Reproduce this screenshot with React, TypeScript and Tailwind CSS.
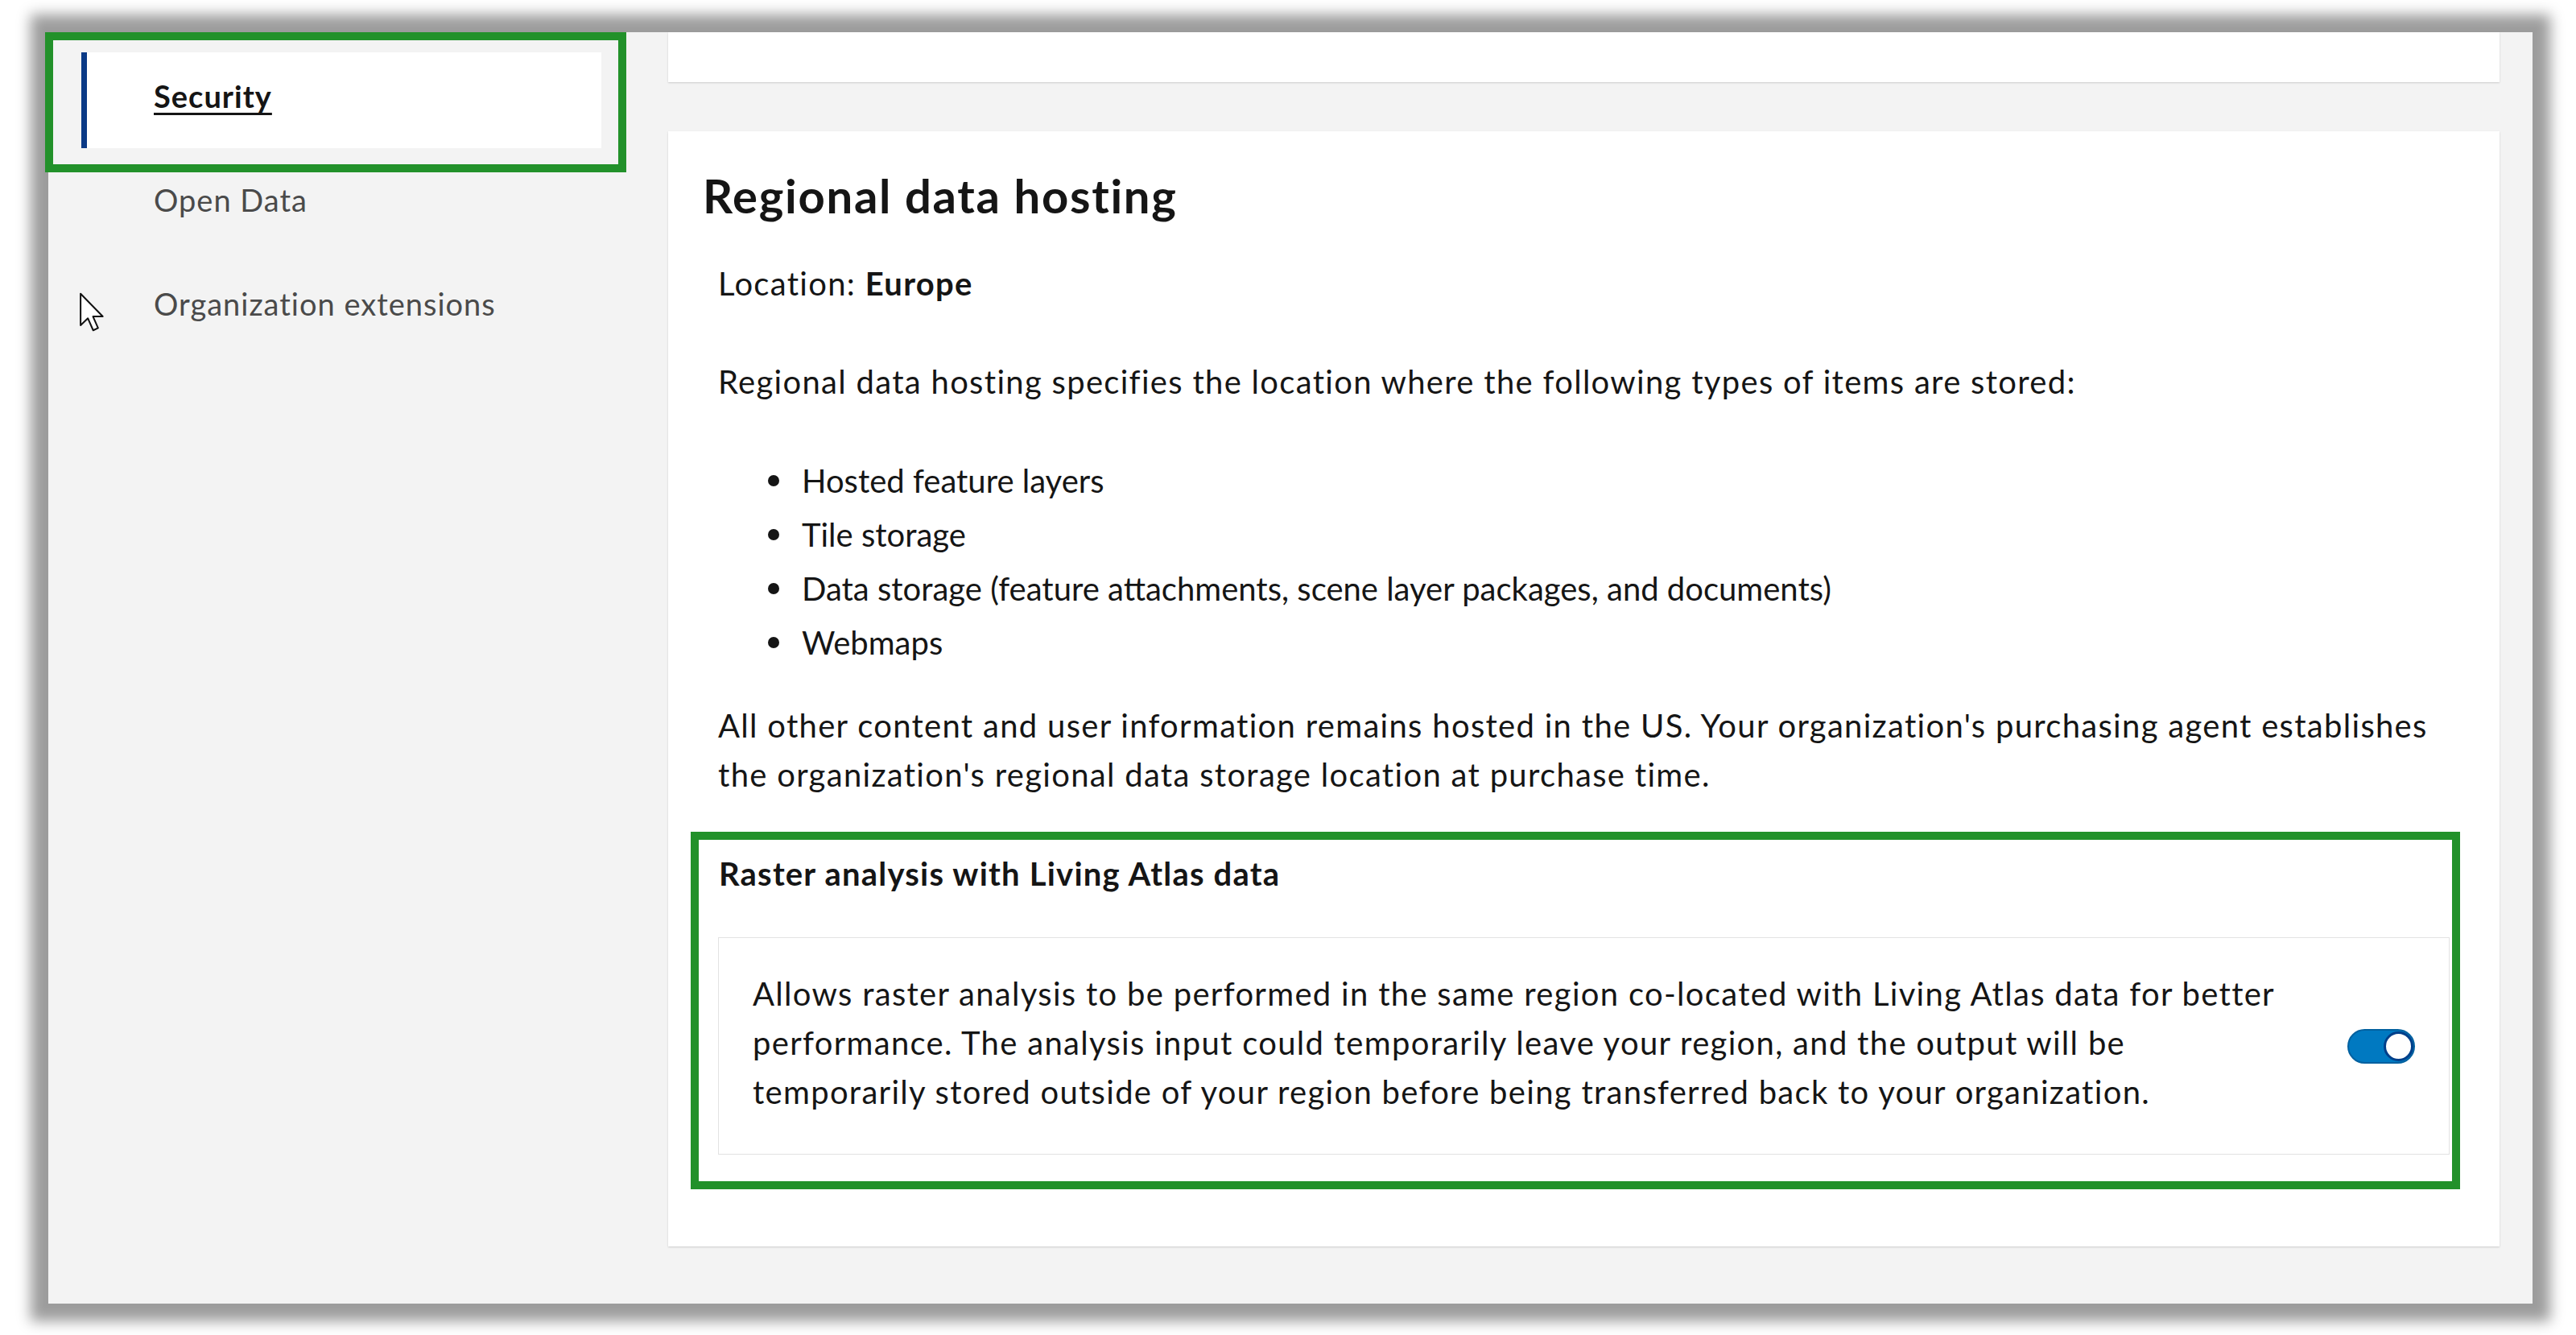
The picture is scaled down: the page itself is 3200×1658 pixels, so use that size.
import React from "react";

const font = { fontFamily: "Lato, 'Noto Sans', sans-serif" };

const navItems = ["Security", "Open Data", "Organization extensions"];

const hostedTypes = [
  "Hosted feature layers",
  "Tile storage",
  "Data storage (feature attachments, scene layer packages, and documents)",
  "Webmaps",
];

function Cursor() {
  return (
    <svg
      className="absolute left-[38px] top-[323px]"
      width="32"
      height="49"
      viewBox="0 0 12.4 19.4"
      aria-hidden
    >
      <path
        d="M0.7 0.7 L0.7 16.2 L4.3 12.8 L6.9 18.7 L9.3 17.6 L6.8 11.9 L11.6 11.9 Z"
        fill="#fff"
        stroke="#111"
        strokeWidth="0.8"
        strokeLinejoin="round"
      />
    </svg>
  );
}

function Toggle() {
  return (
    <div className="mt-[7px] flex h-[43px] w-[84px] shrink-0 items-center justify-end rounded-full border-2 border-[#00609f] bg-[#0079c1]">
      <div className="h-[37px] w-[37px] rounded-full border-[3px] border-[#003f8a] bg-white" />
    </div>
  );
}

export default function App() {
  return (
    <div className="min-h-[1658px] w-[3200px] bg-white pl-[60px] pt-[40px] text-[#151515]" style={font}>
      <div className="relative flex h-[1579px] w-[3086px] bg-[#f3f3f3] shadow-[0_0_16px_22px_rgba(0,0,0,0.39)]">
        {/* left nav */}
        <nav className="flex w-[770px] shrink-0 flex-col gap-[10px] pl-[41px] pt-[25px]">
          {navItems.map((item, i) => (
            <a
              key={item}
              className={[
                "flex h-[119px] w-[646px] items-center pb-[10px] text-[38px] tracking-[1px]",
                i === 0
                  ? "border-l-[7px] border-[#0b3a86] bg-white pl-[83px] font-bold text-[#151515] underline decoration-[3px] underline-offset-[6px]"
                  : "pl-[90px] text-[#4a4a4a]",
              ].join(" ")}
            >
              {item}
            </a>
          ))}
        </nav>

        {/* main content */}
        <main className="flex-1 pr-[41px]">
          <div className="h-[62px] bg-white shadow-[0_1px_2px_rgba(0,0,0,0.16)]" />

          <section className="mt-[61px] bg-white px-[62px] pb-[114px] pt-[46px] text-[40px] tracking-[1.3px] shadow-[0_1px_2px_rgba(0,0,0,0.16)]">
            <h2 className="-ml-[19px] text-[58px] font-bold leading-[68px] tracking-[1.7px]">Regional data hosting</h2>

            <p className="mt-[45px] leading-[60px]">
              Location: <span className="font-bold">Europe</span>
            </p>

            <p className="mt-[62px] leading-[60px]">
              Regional data hosting specifies the location where the following types of items are stored:
            </p>

            <ul className="mt-[63px] flex flex-col gap-[7px] tracking-normal">
              {hostedTypes.map((t) => (
                <li key={t} className="flex items-center leading-[60px]">
                  <span className="ml-[62px] mr-[28px] h-[14px] w-[14px] rounded-full bg-[#151515]" />
                  {t}
                </li>
              ))}
            </ul>

            <p className="mt-[43px] leading-[61px]">
              All other content and user information remains hosted in the US. Your organization's purchasing agent establishes
              <br />
              the organization's regional data storage location at purchase time.
            </p>

            <div className="relative mt-[62px]">
              <h3 className="pl-[1px] text-[40px] font-bold leading-[60px] tracking-[1.2px]">
                Raster analysis with Living Atlas data
              </h3>
              <div className="mt-[49px] flex items-center border border-[#e2e2e2] pb-[46px] pl-[42px] pr-[42px] pt-[39px]">
                <p className="flex-1 leading-[61px]">
                  Allows raster analysis to be performed in the same region co-located with Living Atlas data for better
                  <br />
                  performance. The analysis input could temporarily leave your region, and the output will be
                  <br />
                  temporarily stored outside of your region before being transferred back to your organization.
                </p>
                <Toggle />
              </div>
              {/* annotation frame */}
              <div className="pointer-events-none absolute -bottom-[43px] -left-[34px] -right-[13px] -top-[22px] border-[10px] border-[#22912a]" />
            </div>
          </section>
        </main>

        {/* annotation frame round the Security item */}
        <div className="pointer-events-none absolute -left-[4px] top-0 h-[174px] w-[722px] border-[10px] border-[#22912a]" />
        <Cursor />
      </div>
    </div>
  );
}
